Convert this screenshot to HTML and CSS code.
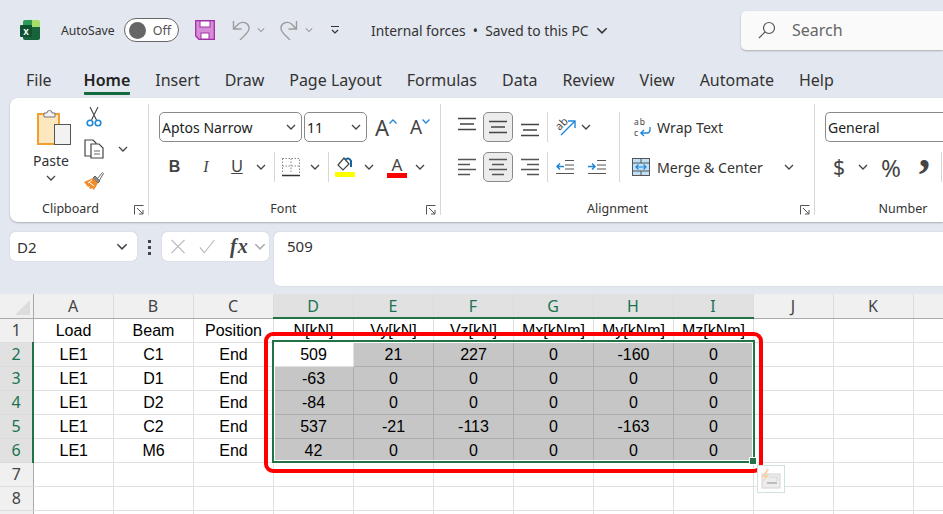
FILE: index.html
```html
<!DOCTYPE html>
<html lang="en">
<head>
    <meta charset="UTF-8">
    <title>Internal forces</title>
    <link rel="stylesheet" href="styles.css">
</head>
<body>
    <svg class="defs" aria-hidden="true">
        <symbol id="chev" viewBox="0 0 10 6"><path d="M1 1l4 4 4-4" fill="none" stroke="currentColor" stroke-width="1.3"/></symbol>
        <symbol id="launch" viewBox="0 0 10 10"><path d="M.5 9.5v-9h9M3 3l6 6M9 5v4H5" fill="none" stroke="#555"/></symbol>
        <symbol id="al-top" viewBox="0 0 20 20"><path d="M1 1.5h18M3 7h14M1 12.5h18" stroke="#444" stroke-width="1.3"/></symbol>
        <symbol id="al-mid" viewBox="0 0 20 20"><path d="M1 4.5h18M3 10h14M1 15.5h18" stroke="#444" stroke-width="1.3"/></symbol>
        <symbol id="al-bot" viewBox="0 0 20 20"><path d="M1 7.5h18M3 13h14M1 18.5h18" stroke="#444" stroke-width="1.3"/></symbol>
        <symbol id="ln-left" viewBox="0 0 20 20"><path d="M1 2.5h18M1 7.5h12M1 12.5h18M1 17.5h12" stroke="#555" stroke-width="1.3"/></symbol>
        <symbol id="ln-center" viewBox="0 0 20 20"><path d="M1 2.5h18M4 7.5h12M1 12.5h18M4 17.5h12" stroke="#555" stroke-width="1.3"/></symbol>
        <symbol id="ln-right" viewBox="0 0 20 20"><path d="M1 2.5h18M7 7.5h12M1 12.5h18M7 17.5h12" stroke="#555" stroke-width="1.3"/></symbol>
    </svg>

    <header class="titlebar">
        <svg class="logo" viewBox="0 0 20 20">
            <path d="M5 0h10v7H3V2a2 2 0 0 1 2-2z" fill="#2f9a52"/>
            <path d="M12 0h6a2 2 0 0 1 2 2v5h-8z" fill="#a5dc6a"/>
            <path d="M3 7h17v11a2 2 0 0 1-2 2H5a2 2 0 0 1-2-2z" fill="#17643a"/>
            <rect x="0" y="5" width="12" height="12" rx="1" fill="#0f5230"/>
            <text x="6" y="14.500" class="logo-x">x</text>
        </svg>
        <span class="autosave">AutoSave</span>
        <span class="toggle"><i class="knob"></i><b>Off</b></span>
        <svg class="save" viewBox="0 0 20 20">
            <path d="M.7.700h18.600v18.600H4L.7 16z" fill="#d68cd8" stroke="#a32ea6" stroke-width="1.300"/>
            <rect x="5" y="1" width="10" height="6" fill="#fff" stroke="#a32ea6"/>
            <rect x="6" y="13" width="8" height="6" fill="#fff" stroke="#a32ea6"/>
        </svg>
        <svg class="undo" viewBox="0 0 20 20"><path d="M2.500 1v8h8M2.500 9l5-5c3.500-3 9.500-1.500 10.500 3 .5 3-1 5-3 7l-6 6" fill="none" stroke="#9c9c9c" stroke-width="1.400"/></svg>
        <svg class="chev qa-chev"><use href="#chev"/></svg>
        <svg class="redo" viewBox="0 0 20 20"><path d="M17.500 1v8h-8M17.500 9l-5-5C9 1 3 2.500 2 7c-.5 3 1 5 3 7l6 6" fill="none" stroke="#9c9c9c" stroke-width="1.400"/></svg>
        <svg class="chev qa-chev2"><use href="#chev"/></svg>
        <svg class="customize" viewBox="0 0 10 10"><path d="M1 1.500h8M2 5l3 3 3-3" fill="none" stroke="#333" stroke-width="1.200"/></svg>
        <span class="doc-title">Internal forces&nbsp; •&nbsp; Saved to this PC</span>
        <svg class="chev doc-chev"><use href="#chev"/></svg>
        <div class="search">
            <svg class="search-icon" viewBox="0 0 18 18"><circle cx="11" cy="7" r="5.500" fill="none" stroke="#555" stroke-width="1.200"/><path d="M7 11l-6 6" stroke="#555" stroke-width="1.200"/></svg>
            <span>Search</span>
        </div>
    </header>

    <nav class="tabs">
        <a class="tab-file">File</a>
        <a class="active">Home</a>
        <a>Insert</a>
        <a>Draw</a>
        <a>Page Layout</a>
        <a>Formulas</a>
        <a>Data</a>
        <a>Review</a>
        <a>View</a>
        <a>Automate</a>
        <a>Help</a>
    </nav>

    <section class="ribbon">
        <!-- Clipboard -->
        <div class="group group-clip">
            <div class="clip-body">
                <div class="paste">
                    <svg class="paste-icon" viewBox="0 0 34 37">
                        <rect x="1" y="6" width="21" height="30" fill="#fde7bf" stroke="#f0a030" stroke-width="2"/>
                        <path d="M7 9V5h3a2.500 2.500 0 0 1 5 0h3v4z" fill="#f2f2f2" stroke="#777"/>
                        <rect x="17.500" y="16.500" width="16" height="20" fill="#f2f2f2" stroke="#555"/>
                    </svg>
                    <span class="paste-label">Paste</span>
                    <svg class="chev"><use href="#chev"/></svg>
                </div>
                <div class="clip-tools">
                    <svg class="tool-icon" viewBox="0 0 20 20">
                        <path d="M6 0l6.500 13M14 0L7.500 13" stroke="#444" fill="none" stroke-width="1.100"/>
                        <circle cx="6" cy="16" r="2.800" fill="none" stroke="#1f86d8" stroke-width="1.600"/>
                        <circle cx="14" cy="16" r="2.800" fill="none" stroke="#1f86d8" stroke-width="1.600"/>
                    </svg>
                    <div class="copy-row">
                        <svg class="tool-icon" viewBox="0 0 20 20">
                            <path d="M8 17H1V1h8l3 3v1" fill="none" stroke="#444" stroke-width="1.200"/>
                            <path d="M7 5h8l4 4v10H7z" fill="#fff" stroke="#444" stroke-width="1.200"/>
                            <path d="M10 12h6M10 15h6" stroke="#666"/>
                        </svg>
                        <svg class="chev copy-chev"><use href="#chev"/></svg>
                    </div>
                    <svg class="tool-icon" viewBox="0 0 20 20">
                        <path d="M13 8l5.500-6.500 1 1L15 10z" fill="#fff" stroke="#666"/>
                        <path d="M11 5l5 5-2 2-5-5z" fill="#8a8a8a" stroke="#666"/>
                        <path d="M9 7l5 5-4 7-2-2-1 1-2-1 1-2-2 1-4-5z" fill="#f28c28"/>
                        <path d="M5 11l5 4M8 9l-4 3" stroke="#fff"/>
                    </svg>
                </div>
            </div>
            <div class="group-label"><span>Clipboard</span><svg class="launcher"><use href="#launch"/></svg></div>
        </div>

        <!-- Font -->
        <div class="group group-font">
            <div class="rows">
                <div class="row font-row1">
                    <div class="combo combo-font"><span>Aptos Narrow</span><svg class="chev"><use href="#chev"/></svg></div>
                    <div class="combo combo-size"><span>11</span><svg class="chev"><use href="#chev"/></svg></div>
                    <div class="grow-btn"><span class="a-big">A</span><svg class="caret" viewBox="0 0 8 5"><path d="M.5 4.500L4 1l3.500 3.500" fill="none" stroke="#1f86d8" stroke-width="1.300"/></svg></div>
                    <div class="shrink-btn"><span class="a-small">A</span><svg class="caret" viewBox="0 0 8 5"><path d="M.5.500L4 4 7.500.500" fill="none" stroke="#1f86d8" stroke-width="1.300"/></svg></div>
                </div>
                <div class="row font-row2">
                    <span class="fmt fmt-b">B</span>
                    <span class="fmt fmt-i">I</span>
                    <span class="fmt fmt-u">U</span>
                    <span class="cell-c"><svg class="chev"><use href="#chev"/></svg></span>
                    <span class="cell-c"><i class="sep"></i></span>
                    <span class="cell-c">
                        <svg class="icon20" viewBox="0 0 20 20"><path d="M1.500 1.500h17v15M1.500 1.500v15M10 1.500v15M1.500 9h17" fill="none" stroke="#888" stroke-dasharray="1.500 1.500"/><path d="M1 18.500h18" stroke="#333" stroke-width="1.600"/></svg>
                    </span>
                    <span class="cell-c"><svg class="chev"><use href="#chev"/></svg></span>
                    <span class="cell-c"><i class="sep"></i></span>
                    <span class="cell-c">
                        <svg class="icon20" viewBox="0 0 20 20">
                            <path d="M9 1L3 8l5 5 6-6z" fill="#fff" stroke="#444" stroke-width="1.200"/>
                            <path d="M10 3c3-3 5-1 6 1v6" fill="none" stroke="#14649e" stroke-width="2"/>
                            <rect x="0" y="15" width="20" height="5" fill="#ffff00"/>
                        </svg>
                    </span>
                    <span class="cell-c"><svg class="chev"><use href="#chev"/></svg></span>
                    <span class="cell-c">
                        <span class="color-a"><span>A</span><i class="bar-red"></i></span>
                    </span>
                    <span class="cell-c"><svg class="chev"><use href="#chev"/></svg></span>
                </div>
            </div>
            <div class="group-label"><span>Font</span><svg class="launcher"><use href="#launch"/></svg></div>
        </div>

        <!-- Alignment -->
        <div class="group group-align">
            <div class="rows">
                <div class="row align-row">
                    <span class="cell-c"><svg class="icon20"><use href="#al-top"/></svg></span>
                    <span class="cell-c toggled"><svg class="icon20"><use href="#al-mid"/></svg></span>
                    <span class="cell-c"><svg class="icon20"><use href="#al-bot"/></svg></span>
                    <i class="sep"></i>
                    <span class="cell-c">
                        <svg class="icon20" viewBox="0 0 20 20">
                            <text x="0" y="11" class="orient-text" transform="rotate(-45 6 7)">ab</text>
                            <path d="M6 18L19 5M13 4h7v7" fill="none" stroke="#1f86d8" stroke-width="1.400"/>
                        </svg>
                    </span>
                    <span class="cell-l"><svg class="chev"><use href="#chev"/></svg></span>
                    <span></span>
                    <i class="sep sep-join"></i>
                    <span class="wide-btn">
                        <svg class="icon18" viewBox="0 0 18 18">
                            <text x="0" y="7" class="wrap-text">ab</text>
                            <text x="0" y="18" class="wrap-text">c</text>
                            <path d="M16 9v3a3 3 0 0 1-3 3H7M10 12l-3.200 3 3.200 3" fill="none" stroke="#1f86d8" stroke-width="1.300"/>
                        </svg>
                        <span>Wrap Text</span>
                    </span>
                </div>
                <div class="row align-row">
                    <span class="cell-c"><svg class="icon20"><use href="#ln-left"/></svg></span>
                    <span class="cell-c toggled"><svg class="icon20"><use href="#ln-center"/></svg></span>
                    <span class="cell-c"><svg class="icon20"><use href="#ln-right"/></svg></span>
                    <i class="sep"></i>
                    <span class="cell-c">
                        <svg class="icon20" viewBox="0 0 20 20"><path d="M10 3.500h9M10 8h9M10 12h9M1 16.500h18M1 3.500h0" stroke="#555" stroke-width="1.200"/><path d="M9 9.500H2M5 6.500l-3 3 3 3" fill="none" stroke="#1f86d8" stroke-width="1.500"/></svg>
                    </span>
                    <span class="cell-c">
                        <svg class="icon20" viewBox="0 0 20 20"><path d="M10 3.500h9M10 8h9M10 12h9M1 16.500h18" stroke="#555" stroke-width="1.200"/><path d="M1 9.500h7M5 6.500l3 3-3 3" fill="none" stroke="#1f86d8" stroke-width="1.500"/></svg>
                    </span>
                    <span></span>
                    <i class="sep"></i>
                    <span class="wide-btn merge-btn">
                        <svg class="icon18" viewBox="0 0 18 18">
                            <rect x=".5" y=".5" width="17" height="17" fill="#bfe0f7" stroke="#555"/>
                            <path d="M.5 5h17M.5 13h17M9 .5V5M9 13v4.500" stroke="#555"/>
                            <path d="M4 9h10M6.500 6.500L4 9l2.500 2.500M11.500 6.500L14 9l-2.500 2.500" fill="none" stroke="#1f86d8" stroke-width="1.200"/>
                        </svg>
                        <span>Merge &amp; Center</span>
                        <svg class="chev merge-chev"><use href="#chev"/></svg>
                    </span>
                </div>
            </div>
            <div class="group-label"><span>Alignment</span><svg class="launcher"><use href="#launch"/></svg></div>
        </div>

        <!-- Number -->
        <div class="group group-number">
            <div class="rows">
                <div class="row">
                    <div class="combo combo-number"><span>General</span></div>
                </div>
                <div class="row number-row">
                    <span class="cell-c num-sym">$</span>
                    <span class="cell-c"><svg class="chev"><use href="#chev"/></svg></span>
                    <span class="cell-c num-pct">%</span>
                    <span class="cell-c num-comma">,</span>
                    <span></span>
                    <i class="sep"></i>
                </div>
            </div>
            <div class="group-label"><span>Number</span></div>
        </div>
    </section>

    <section class="formula-bar">
        <div class="name-box"><span>D2</span><svg class="chev"><use href="#chev"/></svg></div>
        <div class="fb-dots"><i></i><i></i><i></i></div>
        <div class="fx-box">
            <svg class="fx-icon" viewBox="0 0 16 16"><path d="M1 1l14 14M15 1L1 15" stroke="#b5b5b5" stroke-width="1.200"/></svg>
            <svg class="fx-icon fx-check" viewBox="0 0 18 16"><path d="M1 9l5 6L17 1" fill="none" stroke="#b5b5b5" stroke-width="1.200"/></svg>
            <span class="fx-label">fx</span>
            <svg class="chev fx-chev"><use href="#chev"/></svg>
        </div>
        <div class="fb-input">509</div>
    </section>

    <section class="sheet">
        <table class="grid">
            <thead>
                <tr>
                    <th class="corner"><i></i></th>
                    <th>A</th><th>B</th><th>C</th>
                    <th class="on">D</th><th class="on">E</th><th class="on">F</th><th class="on">G</th><th class="on">H</th><th class="on">I</th>
                    <th>J</th><th>K</th><th></th>
                </tr>
            </thead>
            <tbody>
                <tr><th>1</th><td>Load</td><td>Beam</td><td>Position</td><td>N[kN]</td><td>Vy[kN]</td><td>Vz[kN]</td><td>Mx[kNm]</td><td>My[kNm]</td><td>Mz[kNm]</td><td></td><td></td><td></td></tr>
                <tr><th class="on">2</th><td>LE1</td><td>C1</td><td>End</td><td class="active-cell">509</td><td class="sel">21</td><td class="sel">227</td><td class="sel">0</td><td class="sel">-160</td><td class="sel">0</td><td></td><td></td><td></td></tr>
                <tr><th class="on">3</th><td>LE1</td><td>D1</td><td>End</td><td class="sel">-63</td><td class="sel">0</td><td class="sel">0</td><td class="sel">0</td><td class="sel">0</td><td class="sel">0</td><td></td><td></td><td></td></tr>
                <tr><th class="on">4</th><td>LE1</td><td>D2</td><td>End</td><td class="sel">-84</td><td class="sel">0</td><td class="sel">0</td><td class="sel">0</td><td class="sel">0</td><td class="sel">0</td><td></td><td></td><td></td></tr>
                <tr><th class="on">5</th><td>LE1</td><td>C2</td><td>End</td><td class="sel">537</td><td class="sel">-21</td><td class="sel">-113</td><td class="sel">0</td><td class="sel">-163</td><td class="sel">0</td><td></td><td></td><td></td></tr>
                <tr><th class="on">6</th><td>LE1</td><td>M6</td><td>End</td><td class="sel">42</td><td class="sel">0</td><td class="sel">0</td><td class="sel">0</td><td class="sel">0</td><td class="sel">0</td><td></td><td></td><td></td></tr>
                <tr><th>7</th><td></td><td></td><td></td><td></td><td></td><td></td><td></td><td></td><td></td><td></td><td></td><td></td></tr>
                <tr><th>8</th><td></td><td></td><td></td><td></td><td></td><td></td><td></td><td></td><td></td><td></td><td></td><td></td></tr>
                <tr><th></th><td></td><td></td><td></td><td></td><td></td><td></td><td></td><td></td><td></td><td></td><td></td><td></td></tr>
            </tbody>
        </table>

        <!-- things drawn over the grid -->
        <div class="selection"><i class="handle"></i></div>
        <div class="red-box"></div>
        <div class="quick-analysis">
            <svg viewBox="0 0 26 26">
                <rect x="4" y="8" width="18" height="14" fill="#ececec" stroke="#d4d4d4"/>
                <path d="M9 17h10" stroke="#bdbdbd" stroke-width="2"/>
                <path d="M11 11h8v4" fill="none" stroke="#d4d4d4"/>
                <path d="M9 3L4 11h3l-3 6 7-8H8l3-6z" fill="#f8d3a8"/>
            </svg>
        </div>
    </section>
</body>
</html>
```

FILE: styles.css
```css
* {
    box-sizing: border-box;
}
html, body {
    height: 514px;
    overflow: hidden;
}
body {
    margin: 0;
    background-color: #e3e7ef;
    color: #333;
    font-family: "Noto Sans", sans-serif;
    font-size: 14px;
}
.defs {
    display: none;
}
i {
    display: block;
}
.chev {
    display: block;
    width: 10px;
    height: 6px;
    color: #444;
    flex: none;
}

/* title bar */
.titlebar {
    display: flex;
    align-items: center;
    height: 60px;
    padding-left: 20px;
    white-space: nowrap;
}
.titlebar > * {
    flex: none;
}
.logo {
    width: 20px;
    height: 20px;
}
.logo-x {
    font: bold 10px "Liberation Sans", sans-serif;
    fill: #fff;
    text-anchor: middle;
}
.autosave {
    margin-left: 21px;
    width: 53px;
    font-size: 12.2px;
    color: #333;
}
.toggle {
    display: flex;
    align-items: center;
    justify-content: space-between;
    margin-left: 10px;
    width: 55px;
    height: 24px;
    padding: 0 7px 0 4px;
    background-color: #fff;
    border: 1px solid #666;
    border-radius: 12px;
}
.knob {
    width: 17px;
    height: 17px;
    border-radius: 50%;
    background-color: #666;
}
.toggle b {
    font-weight: 400;
    font-size: 12.5px;
    color: #555;
}
.save {
    margin-left: 16px;
    width: 20px;
    height: 20px;
}
.undo {
    margin-left: 16px;
    width: 20px;
    height: 20px;
}
.qa-chev {
    margin-left: 6px;
    width: 8px;
    color: #999;
}
.redo {
    margin-left: 14px;
    width: 20px;
    height: 20px;
}
.qa-chev2 {
    margin-left: 6px;
    width: 8px;
    color: #999;
}
.customize {
    margin-left: 17px;
    width: 10px;
    height: 10px;
}
.doc-title {
    margin-left: 31px;
    width: 225px;
    font-size: 13.800px;
    color: #333;
}
.doc-chev {
    width: 12px;
    height: 7px;
    color: #333;
}
.search {
    display: flex;
    align-items: center;
    margin-left: 133px;
    width: 202px;
    height: 39px;
    padding-left: 17px;
    background-color: #fafafa;
    border-radius: 5px 0 0 5px;
    box-shadow: 0 1px 2px rgba(0, 0, 0, .25);
    color: #666;
    font-size: 16px;
}
.search-icon {
    width: 18px;
    height: 18px;
    margin-right: 16px;
}

/* tabs */
.tabs {
    display: flex;
    gap: 25px;
    height: 38px;
    padding-left: 26px;
    font-size: 16px;
    color: #333;
}
.tabs a {
    height: 35px;
    line-height: 40px;
}
.tabs .tab-file {
    margin-right: 7px;
}
.tabs a.active {
    color: #222;
    font-weight: 600;
    border-bottom: 3px solid #116b3f;
    border-radius: 0 0 1px 1px;
}

/* ribbon */
.ribbon {
    display: flex;
    height: 124px;
    margin-left: 10px;
    padding-top: 6px;
    background-color: #fff;
    border-radius: 8px 0 0 8px;
    box-shadow: 0 1px 2px rgba(0, 0, 0, .25);
    overflow: hidden;
}
.group {
    display: flex;
    flex-direction: column;
    flex: none;
    height: 111px;
    border-right: 1px solid #d6d6d6;
}
.group-clip {
    width: 139px;
}
.group-font {
    width: 292px;
    padding-left: 10px;
}
.group-align {
    width: 374px;
    padding-left: 9px;
}
.group-number {
    width: 128px;
    padding-left: 10px;
    border-right: none;
}
.group-label {
    position: relative;
    margin: auto 0 -1px;
    height: 14px;
    line-height: 14px;
    text-align: center;
    font-size: 12.500px;
    color: #333;
}
.group-clip .group-label {
    padding-right: 17px;
}
.group-font .group-label {
    margin-left: -10px;
    padding-right: 22px;
}
.group-align .group-label {
    margin-left: -9px;
    padding-right: 20px;
}
.group-number .group-label {
    margin-left: -10px;
    padding-left: 48px;
}
.launcher {
    position: absolute;
    right: 4px;
    top: 3px;
    width: 10px;
    height: 10px;
}
.rows {
    display: flex;
    flex-direction: column;
    gap: 10px;
    padding-top: 8px;
}
.row {
    height: 30px;
}
.sep {
    width: 1px;
    height: 30px;
    background-color: #d6d6d6;
}
.sep-join {
    height: 40px;
}
.cell-c {
    display: flex;
    align-items: center;
    justify-content: center;
}
.cell-l {
    display: flex;
    align-items: center;
}
.icon20 {
    display: block;
    width: 20px;
    height: 20px;
    overflow: visible;
}
.icon18 {
    display: block;
    flex: none;
    width: 18px;
    height: 18px;
    overflow: visible;
}

/* clipboard group */
.clip-body {
    display: flex;
    padding: 4px 0 0 27px;
}
.paste {
    display: flex;
    flex-direction: column;
    align-items: center;
    width: 34px;
}
.paste-icon {
    width: 34px;
    height: 37px;
}
.paste-label {
    margin: 6px 6px 0 0;
    font-size: 14px;
    line-height: 20px;
}
.paste .chev {
    margin: 4px 6px 0 0;
}
.clip-tools {
    display: flex;
    flex-direction: column;
    gap: 12px;
    margin: -1px 0 0 13px;
}
.tool-icon {
    display: block;
    width: 20px;
    height: 20px;
}
.copy-row {
    display: flex;
    align-items: center;
}
.copy-chev {
    margin-left: 14px;
}

/* font group */
.font-row1 {
    display: flex;
}
.combo {
    display: flex;
    align-items: center;
    justify-content: space-between;
    height: 30px;
    padding: 0 5px 0 2px;
    border: 1px solid #8a8a8a;
    border-radius: 5px;
    font-size: 14px;
    color: #222;
}
.combo-font {
    width: 143px;
}
.combo-size {
    width: 63px;
    margin-left: 2px;
}
.combo-number {
    width: 118px;
    border-right: none;
    border-radius: 5px 0 0 5px;
}
.grow-btn, .shrink-btn {
    display: flex;
    align-items: flex-start;
    color: #444;
}
.grow-btn {
    width: 34px;
    padding: 0 0 0 8px;
}
.shrink-btn {
    width: 38px;
    padding: 0 0 0 9px;
}
.a-big {
    font-size: 22px;
    line-height: 30px;
}
.a-small {
    font-size: 19px;
    line-height: 31px;
}
.caret {
    width: 8px;
    height: 5px;
    margin-top: 7px;
}
.font-row2 {
    display: grid;
    grid-template-columns: 31px 32px 30px 18px 8px 26px 22px 4px 30px 18px 38px 8px;
    align-items: center;
    height: 30px;
    color: #444;
}
.fmt {
    text-align: center;
    font-family: "Liberation Sans", sans-serif;
    font-size: 16px;
}
.fmt-b {
    font-weight: 700;
}
.fmt-i {
    font-family: "Liberation Serif", serif;
    font-style: italic;
}
.fmt-u {
    text-decoration: underline;
}
.color-a {
    display: flex;
    flex-direction: column;
    align-items: center;
    width: 20px;
    height: 22px;
    font-size: 17px;
    line-height: 17px;
}
.bar-red {
    margin-top: 0;
    width: 20px;
    height: 5px;
    background-color: #f00;
}

/* alignment group */
.align-row {
    display: grid;
    grid-template-columns: 33px 30px 34px 1px 33px 32px 6px 1px 1fr;
    grid-template-rows: 30px;
}
.toggled {
    background-color: #ececec;
    border: 1px solid #8a8a8a;
    border-radius: 5px;
}
.orient-text {
    font: 11px "Noto Sans", sans-serif;
    fill: #444;
}
.wrap-text {
    font: 8.500px "Noto Sans", sans-serif;
    letter-spacing: 1px;
    fill: #444;
}
.wide-btn {
    display: flex;
    align-items: center;
    gap: 5px;
    padding-left: 14px;
    font-size: 14.200px;
    color: #333;
}
.merge-btn {
    padding-left: 12px;
    gap: 7px;
}
.merge-chev {
    margin-left: 14px;
}

/* number group */
.number-row {
    display: grid;
    grid-template-columns: 28px 20px 36px 28px 4px 1px;
    grid-template-rows: 30px;
    align-items: center;
    color: #444;
}
.num-sym {
    font-size: 21px;
}
.num-pct {
    font-size: 24px;
}
.num-comma {
    font-family: "Liberation Serif", serif;
    font-weight: 700;
    font-size: 46px;
    line-height: 10px;
    padding: 0 0 30px 3px;
}

/* formula bar */
.formula-bar {
    display: flex;
    align-items: flex-start;
    height: 54px;
    margin: 10px 0 8px 10px;
}
.name-box {
    display: flex;
    align-items: center;
    justify-content: space-between;
    width: 127px;
    height: 29px;
    padding: 0 9px 0 7px;
    background-color: #fff;
    border-radius: 5px;
    box-shadow: 0 0 1px rgba(0, 0, 0, .3);
    font-size: 15px;
}
.name-box .chev {
    width: 12px;
    height: 7px;
}
.fb-dots {
    display: flex;
    flex-direction: column;
    align-items: center;
    gap: 3px;
    width: 25px;
    padding-top: 8px;
}
.fb-dots i {
    width: 3px;
    height: 3px;
    background-color: #444;
}
.fx-box {
    display: flex;
    align-items: center;
    width: 107px;
    height: 29px;
    padding-left: 8px;
    background-color: #fff;
    border-radius: 5px;
    box-shadow: 0 0 1px rgba(0, 0, 0, .3);
}
.fx-icon {
    width: 16px;
    height: 15px;
    margin-right: 13px;
}
.fx-check {
    margin-right: 15px;
}
.fx-label {
    font-family: "Liberation Serif", serif;
    font-style: italic;
    font-weight: 700;
    font-size: 20px;
    letter-spacing: 1px;
    color: #444;
}
.fx-chev {
    margin-left: 5px;
    width: 12px;
    height: 7px;
    color: #aaa;
}
.fb-input {
    flex: 1;
    height: 54px;
    margin-left: 5px;
    padding: 4px 0 0 13px;
    background-color: #fff;
    border-radius: 5px 0 0 5px;
    box-shadow: 0 0 1px rgba(0, 0, 0, .3);
    font-size: 15px;
}

/* sheet */
.sheet {
    position: relative;
    height: 220px;
    background-color: #fff;
    overflow: hidden;
}
.grid {
    table-layout: fixed;
    width: 943px;
    border-collapse: collapse;
    font-family: "Liberation Sans", sans-serif;
    font-size: 16px;
    color: #000;
}
.grid tr {
    height: 24px;
}
.grid th, .grid td {
    padding: 0;
    height: 24px;
    text-align: center;
    white-space: nowrap;
    overflow: hidden;
}
.grid td {
    padding: 1px 0 0 1px;
    border-right: 1px solid #e0e0e0;
    border-bottom: 1px solid #e0e0e0;
}
.grid th {
    width: 80px;
    background-color: #f0f0f0;
    border-right: 1px solid #dcdcdc;
    border-bottom: 1px solid #dcdcdc;
    font-family: "Noto Sans", sans-serif;
    font-weight: 400;
    font-size: 16px;
    color: #444;
}
.grid th:first-child {
    width: 33px;
    border-right: 1px solid #aaa;
}
.grid th:last-child {
    width: 30px;
}
.grid thead th {
    border-bottom: 1px solid #aaa;
}
.grid th.on {
    background-color: #e1e1e1;
    color: #1a7350;
}
.grid thead th.on {
    border-bottom: 2px solid #217346;
}
.grid tbody th.on {
    border-right: 2px solid #217346;
}
.corner {
    position: relative;
}
.corner i {
    position: absolute;
    right: 3px;
    bottom: 3px;
    width: 0;
    height: 0;
    border-left: 15px solid transparent;
    border-bottom: 15px solid #dcdcdc;
}
.grid td.sel {
    background-color: #c6c6c6;
    border-color: #adadad;
}
.active-cell {
    background-color: #fff;
}

/* overlays */
.selection {
    position: absolute;
    left: 272px;
    top: 46px;
    width: 483px;
    height: 123px;
    border: 2px solid #217346;
    outline: 1px solid #fff;
    outline-offset: -3px;
}
.handle {
    position: absolute;
    right: -3px;
    bottom: -3px;
    width: 6px;
    height: 6px;
    background-color: #217346;
    box-shadow: 0 0 0 1px #fff;
}
.red-box {
    position: absolute;
    left: 264px;
    top: 38px;
    width: 499px;
    height: 141px;
    border: 4px solid #f00;
    border-radius: 9px;
}
.quick-analysis {
    position: absolute;
    left: 757px;
    top: 171px;
    width: 28px;
    height: 28px;
    background-color: #fff;
    border: 1px solid #cfe3da;
}
.quick-analysis svg {
    display: block;
    width: 26px;
    height: 26px;
}
```
